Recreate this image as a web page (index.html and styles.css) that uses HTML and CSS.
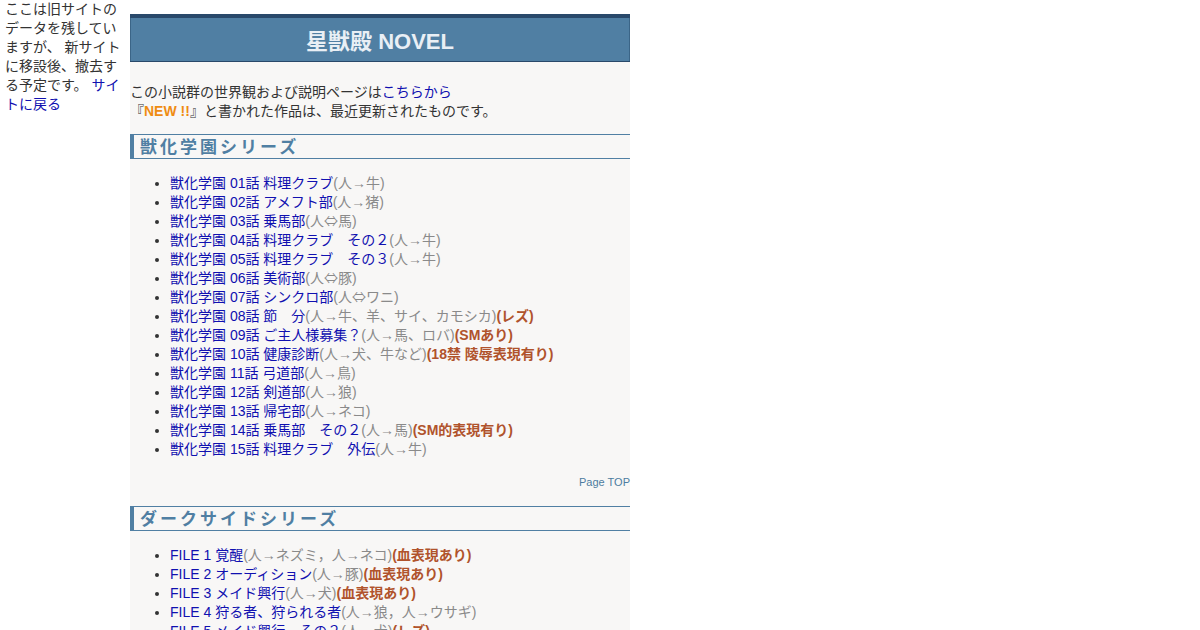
FILE: index.html
```html
<!DOCTYPE html>
<html lang="ja">
<head>
<meta charset="utf-8">
<title>星獣殿 NOVEL</title>
<link rel="stylesheet" href="styles.css">
</head>
<body>
<div class="page">
  <aside class="side">ここは旧サイトのデータを残していますが、 新サイトに移設後、撤去する予定です。 <a href="#">サイトに戻る</a></aside>
  <main class="main">
    <h1 class="title">星獣殿 NOVEL</h1>
    <p class="intro">この小説群の世界観および説明ページは<a href="#">こちらから</a><br>『<span class="new">NEW !!</span>』と書かれた作品は、最近更新されたものです。</p>

    <h2 class="sec">獣化学園シリーズ</h2>
    <ul class="list">
      <li><a href="#">獣化学園 01話 料理クラブ</a><span class="note">(人→牛)</span></li>
      <li><a href="#">獣化学園 02話 アメフト部</a><span class="note">(人→猪)</span></li>
      <li><a href="#">獣化学園 03話 乗馬部</a><span class="note">(人<span class="sym">⇔</span>馬)</span></li>
      <li><a href="#">獣化学園 04話 料理クラブ　その２</a><span class="note">(人→牛)</span></li>
      <li><a href="#">獣化学園 05話 料理クラブ　その３</a><span class="note">(人→牛)</span></li>
      <li><a href="#">獣化学園 06話 美術部</a><span class="note">(人<span class="sym">⇔</span>豚)</span></li>
      <li><a href="#">獣化学園 07話 シンクロ部</a><span class="note">(人<span class="sym">⇔</span>ワニ)</span></li>
      <li><a href="#">獣化学園 08話 節　分</a><span class="note">(人→牛、羊、サイ、カモシカ)</span><b class="warn">(レズ)</b></li>
      <li><a href="#">獣化学園 09話 ご主人様募集？</a><span class="note">(人→馬、ロバ)</span><b class="warn">(SMあり)</b></li>
      <li><a href="#">獣化学園 10話 健康診断</a><span class="note">(人→犬、牛など)</span><b class="warn">(18禁 陵辱表現有り)</b></li>
      <li><a href="#">獣化学園 11話 弓道部</a><span class="note">(人→鳥)</span></li>
      <li><a href="#">獣化学園 12話 剣道部</a><span class="note">(人→狼)</span></li>
      <li><a href="#">獣化学園 13話 帰宅部</a><span class="note">(人→ネコ)</span></li>
      <li><a href="#">獣化学園 14話 乗馬部　その２</a><span class="note">(人→馬)</span><b class="warn">(SM的表現有り)</b></li>
      <li><a href="#">獣化学園 15話 料理クラブ　外伝</a><span class="note">(人→牛)</span></li>
    </ul>
    <div class="top"><a href="#">Page TOP</a></div>

    <h2 class="sec">ダークサイドシリーズ</h2>
    <ul class="list">
      <li><a href="#">FILE 1 覚醒</a><span class="note">(人→ネズミ，人→ネコ)</span><b class="warn">(血表現あり)</b></li>
      <li><a href="#">FILE 2 オーディション</a><span class="note">(人→豚)</span><b class="warn">(血表現あり)</b></li>
      <li><a href="#">FILE 3 メイド興行</a><span class="note">(人→犬)</span><b class="warn">(血表現あり)</b></li>
      <li><a href="#">FILE 4 狩る者、狩られる者</a><span class="note">(人→狼，人→ウサギ)</span></li>
      <li><a href="#">FILE 5 メイド興行　その２</a><span class="note">(人→犬)</span><b class="warn">(レズ)</b></li>
    </ul>
  </main>
</div>
</body>
</html>
```

FILE: styles.css
```css
html, body {
  margin: 0;
  padding: 0;
  background: #ffffff;
}
body {
  font-family: "Liberation Sans", "Noto Sans CJK JP", sans-serif;
  font-size: 14px;
  line-height: 19px;
  color: #333333;
}
a {
  color: #1010b0;
  text-decoration: none;
}
.page {
  display: flex;
  align-items: flex-start;
}
.side {
  box-sizing: border-box;
  width: 130px;
  padding: 0 6px 0 5px;
  flex: none;
}
.main {
  width: 500px;
  margin-top: 14px;
  background: #f8f7f6;
  flex: none;
  padding-bottom: 40px;
}
.title {
  margin: 0;
  height: 43px;
  line-height: 47px;
  background: #507fa3;
  border-top: 4px solid #29496a;
  border-bottom: 1px solid #29496a;
  box-shadow: inset 1px 0 0 #3b6587, inset -1px 0 0 #3b6587;
  color: #e9eff5;
  font-size: 22px;
  font-weight: bold;
  text-align: center;
}
.intro {
  margin: 21px 0 13px;
}
.new {
  color: #ef8c12;
  font-weight: bold;
}
.sec {
  margin: 0;
  height: 23px;
  line-height: 25px;
  border-top: 1px solid #507fa3;
  border-bottom: 1px solid #507fa3;
  border-left: 4px solid #507fa3;
  padding-left: 6px;
  color: #507fa3;
  font-size: 17px;
  font-weight: bold;
  letter-spacing: 3px;
}
.list {
  margin: 15px 0 0;
  padding-left: 40px;
}
.list li {
  height: 19px;
}
.note {
  color: #8a8a8a;
}
.sym {
  font-family: "Noto Sans CJK JP", sans-serif;
  line-height: 0;
}
.warn {
  color: #b0532c;
  font-weight: bold;
}
.top {
  text-align: right;
  font-size: 11px;
  line-height: 14px;
  margin: 16px 0 17px;
}
.top a {
  color: #4d7ca0;
}
```
